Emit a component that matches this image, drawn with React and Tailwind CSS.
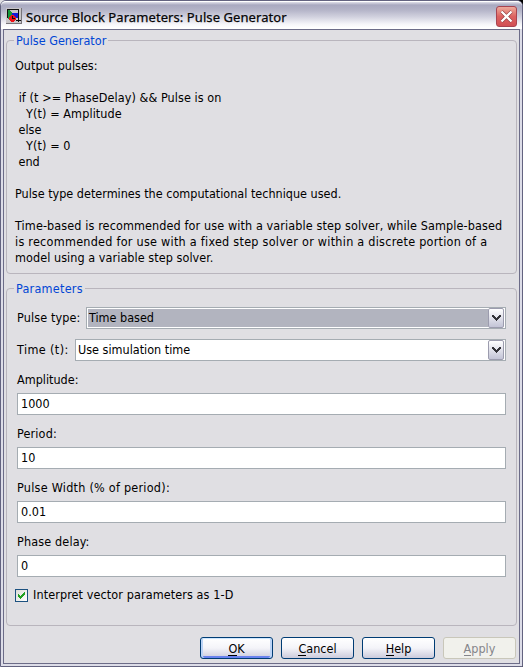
import React from "react";

function Group({ title, spacing, className, children }) {
  return (
    <section className={`relative w-[511px] rounded-[4px] border border-[#b9b5bd] ${className}`}>
      <h2 className={`absolute -top-[9px] left-[7px] bg-[#e0dfe3] px-[2px] leading-[18px] text-[#0046d5] ${spacing}`}>
        {title}
      </h2>
      {children}
    </section>
  );
}

function Select({ label, value, active, gap }) {
  return (
    <div className="flex h-[22px] items-center">
      <span className={`shrink-0 ${gap}`}>{label}</span>
      <div className="flex h-[22px] flex-1 border border-[#a5acb2] bg-white p-px">
        <div className={`flex flex-1 items-center pl-px ${active ? "bg-[#b2b4bf]" : ""}`}>{value}</div>
        <div className="-my-px flex w-[16px] items-center justify-center rounded-[2px] border border-[#9c9cae] bg-gradient-to-b from-white to-[#c3c4d6]">
          <svg width="9" height="6" viewBox="0 0 9 6" shapeRendering="crispEdges" fill="#333338">
            <path d="M0 0h2v1h1v1h1v1h1v-1h1v-1h1v-1h2v2h-1v1h-1v1h-1v1h-1v1h-1v-1h-1v-1h-1v-1h-1v-1h-1z" />
          </svg>
        </div>
      </div>
    </div>
  );
}

function Field({ label, value, spacing = "" }) {
  return (
    <label className="flex h-[54px] flex-col">
      <span className={`h-[32px] pt-[11px] leading-[16px] ${spacing}`}>{label}</span>
      <span className="flex h-[22px] items-center border border-[#a5acb2] bg-white pl-[3px]">{value}</span>
    </label>
  );
}

function Button({ first, rest, look }) {
  return (
    <button className={`flex h-[22px] w-[73px] items-center justify-center rounded-[3px] border pt-px ${look}`}>
      <span className="border-b border-current leading-[13px]">{first}</span>
      <span className="border-b border-transparent leading-[13px]">{rest}</span>
    </button>
  );
}

const help = [
  ["Output pulses:", ""],
  ["", ""],
  [" if (t >= PhaseDelay) && Pulse is on", "tracking-[0.08px]"],
  ["   Y(t) = Amplitude", "tracking-[0.1px]"],
  [" else", ""],
  ["   Y(t) = 0", "tracking-[0.1px]"],
  [" end", ""],
  ["", ""],
  ["Pulse type determines the computational technique used.", ""],
  ["", ""],
  ["Time-based is recommended for use with a variable step solver, while Sample-based", "tracking-[0.11px]"],
  ["is recommended for use with a fixed step solver or within a discrete portion of a", "tracking-[0.26px]"],
  ["model using a variable step solver.", "tracking-[0.06px]"],
];

const normal = "border-[#003c74] bg-gradient-to-b from-white via-[#f4f4f9] to-[#cccbdc]";

export default function App() {
  return (
    <div className="h-[667px] w-[523px] overflow-hidden bg-[linear-gradient(90deg,#e0dfe3_50%,#000_50%)] font-['DejaVu_Sans_Condensed','DejaVu_Sans',sans-serif] text-[12.5px] text-black">
      <div className="flex h-full flex-col rounded-t-[6px] border border-[#636380] bg-[#dddde8]">
        <header className="flex h-[28px] shrink-0 items-center rounded-t-[5px] border-t border-white bg-[linear-gradient(#e0e0ea_0px,#a9a9c0_3px,#b4b4c8_8px,#d2d2df_15px,#f5f5f9_22px,#ffffff_26px)] pl-[5px] pr-[5px]">
          <svg width="16" height="16" viewBox="0 0 16 16" shapeRendering="crispEdges" className="shrink-0">
            <path fill="#c8c5c8" d="M0 0h16v16H0z" />
            <path fill="#77747a" d="M15 0h1v16H0v-1h15z" />
            <path fill="#18963c" d="M2 2h1l5 4-5 5H2z" />
            <path fill="#1518d8" d="M6 5h7v5H6z" />
            <path fill="none" stroke="#111" d="M1.500 10V1.500H12.500V14M10 12.500h5" />
            <circle cx="6.500" cy="10.500" r="3.300" fill="#f01018" />
            <path fill="#111" d="M6 8h1v3H6zM6 10h3v1H6z" />
          </svg>
          <h1 className="ml-[4px] mt-[2px] whitespace-nowrap font-['Noto_Sans',sans-serif] text-[13px] font-normal leading-[20px] tracking-[0.08px] [-webkit-text-stroke:0.25px_#111]">
            Source Block Parameters: Pulse Generator
          </h1>
          <button className="ml-auto mt-[1px] flex h-[21px] w-[21px] items-center justify-center rounded-[3px] border border-[#a84450] bg-gradient-to-b from-[#ecaa9c] via-[#dc6260] to-[#d24f54]">
            <svg width="15" height="15" viewBox="0 0 15 15" fill="none" className="shrink-0">
              <path d="M2.500 2.500l10 10M12.500 2.500l-10 10" stroke="#8a343a" strokeWidth="3.400" />
              <path d="M2.500 2.500l10 10M12.500 2.500l-10 10" stroke="white" strokeWidth="2.400" />
            </svg>
          </button>
        </header>
        <main className="mx-[2px] mb-[2px] flex flex-1 flex-col border border-[#6c6c88] bg-[#e0dfe3] pl-[2px] pt-[10px]">
          <Group title="Pulse Generator" spacing="" className="h-[234px] pl-[8px] pt-[17px]">
            <div className="leading-[16px]">
              {help.map(([line, spacing], i) => (
                <p key={i} className={`h-[16px] whitespace-pre [font-variant-ligatures:none] ${spacing}`}>{line}</p>
              ))}
            </div>
          </Group>
          <Group title="Parameters" spacing="tracking-[0.25px]" className="mt-[14px] h-[338px] px-[10px] pt-[18px]">
            <div className="flex flex-col gap-[10px]">
              <Select label="Pulse type:" value="Time based" active gap="w-[69px] tracking-[0.12px]" />
              <Select label="Time (t):" value="Use simulation time" gap="w-[58px] tracking-[0.4px]" />
            </div>
            <Field label="Amplitude:" value="1000" />
            <Field label="Period:" value="10" spacing="tracking-[0.15px]" />
            <Field label="Pulse Width (% of period):" value="0.01" spacing="tracking-[0.25px]" />
            <Field label="Phase delay:" value="0" spacing="tracking-[0.15px]" />
            <div className="-ml-[2px] mt-[10px] flex items-center">
              <span className="flex h-[13px] w-[13px] items-center justify-center border border-[#1c5180] bg-gradient-to-br from-[#dcdcd7] to-white">
                <svg width="7" height="7" viewBox="0 0 7 7" shapeRendering="crispEdges" fill="#21a121">
                  <path d="M6 0h1v3h-1v1h-1v1h-1v1h-1v1h-1v-1h-1v-1h-1v-3h1v1h1v1h1v-1h1v-1h1v-1h1z" />
                </svg>
              </span>
              <span className="ml-[5px] leading-[16px] tracking-[0.1px]">Interpret vector parameters as 1-D</span>
            </div>
          </Group>
          <footer className="mt-[11px] flex gap-[8px] pl-[194px]">
            <Button first="O" rest="K" look={`${normal} shadow-[inset_0_1px_0_#cee7ff,inset_2px_0_0_#bcd4f6,inset_-2px_0_0_#bcd4f6,inset_0_-2px_0_#6982ee]`} />
            <Button first="C" rest="ancel" look={normal} />
            <Button first="H" rest="elp" look={normal} />
            <Button first="A" rest="pply" look="border-[#c9c7ba] bg-[#f1f1ec] text-[#85858a]" />
          </footer>
        </main>
      </div>
    </div>
  );
}
